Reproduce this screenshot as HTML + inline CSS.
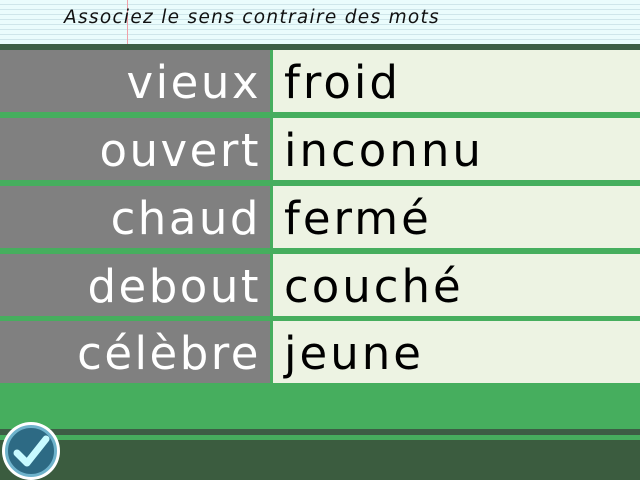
<!DOCTYPE html>
<html><head><meta charset="utf-8"><style>
*{margin:0;padding:0;box-sizing:border-box}
body{width:640px;height:480px;overflow:hidden;position:relative;background:#46ae5e;font-family:"DejaVu Sans",sans-serif}
.top{position:absolute;left:0;top:0;width:640px;height:44px;background:repeating-linear-gradient(#eafcfc 0 4px,#cfe6ea 4px 5px)}
.margin{position:absolute;left:127px;top:0;width:1px;height:44px;background:#f0a0a8}
.title{position:absolute;left:64px;top:7px;font-size:18.5px;font-style:italic;color:#111;letter-spacing:1.3px}
.dk{position:absolute;left:0;top:44px;width:640px;height:6px;background:#3d5e45}
.row{position:absolute;left:0;width:640px;height:62px;background:#46ae5e}
.l{position:absolute;left:0;top:0;width:270px;height:62px;background:#808080;color:#fff;text-align:right;padding-right:9px;font-size:45px;line-height:66px;font-weight:normal;letter-spacing:2.5px;white-space:nowrap}
.r{position:absolute;left:273px;top:0;width:367px;height:62px;background:#edf3e3;color:#000;padding-left:11px;font-size:45px;line-height:66px;letter-spacing:3px;white-space:nowrap}
.b1{position:absolute;left:0;top:429px;width:640px;height:6px;background:#3d5e45}
.b2{position:absolute;left:0;top:440px;width:640px;height:40px;background:#3b5c3f}
.chk{position:absolute;left:2px;top:422px;width:58px;height:58px;border-radius:50%;background:#fff;padding:3px}
.chk div{width:52px;height:52px;border-radius:50%;background:#2d6a84;border:3px solid #6fb3cc}
</style></head><body>
<div class="top"></div><div class="margin"></div>
<div class="title">Associez le sens contraire des mots</div>
<div class="dk"></div>
<div class="row" style="top:50px"><div class="l">vieux</div><div class="r">froid</div></div>
<div class="row" style="top:118px"><div class="l">ouvert</div><div class="r">inconnu</div></div>
<div class="row" style="top:186px"><div class="l">chaud</div><div class="r">fermé</div></div>
<div class="row" style="top:254px"><div class="l">debout</div><div class="r">couché</div></div>
<div class="row" style="top:321px"><div class="l">célèbre</div><div class="r">jeune</div></div>
<div class="b1"></div><div class="b2"></div>
<div class="chk"><div></div></div>
<svg style="position:absolute;left:2px;top:422px" width="58" height="58"><path d="M15 31 L25 41 L44 17" fill="none" stroke="#c8faff" stroke-width="7" stroke-linecap="round" stroke-linejoin="round"/></svg>
</body></html>
